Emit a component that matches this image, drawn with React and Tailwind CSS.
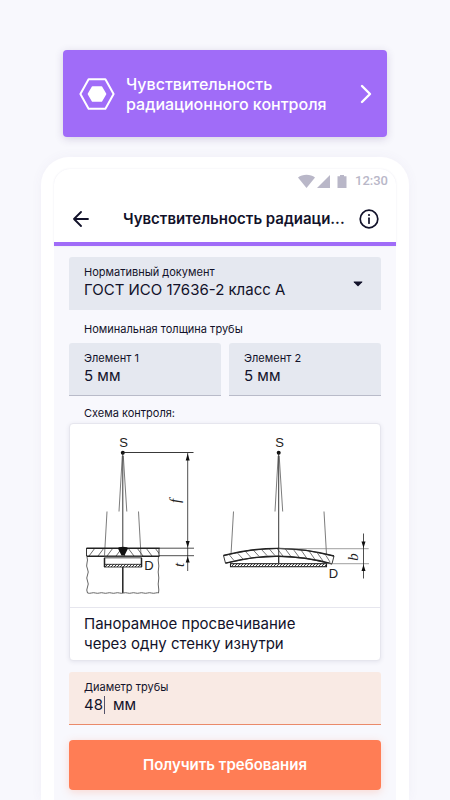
import React, { useState } from "react";

const Chevron = () => (
  <svg className="w-3 h-5 shrink-0" viewBox="0 0 12 20" fill="none" stroke="white" strokeWidth="2.4" strokeLinecap="round" strokeLinejoin="round">
    <path d="M2 2l8 8-8 8" />
  </svg>
);

const HexIcon = () => (
  <svg className="w-9 h-8 shrink-0" viewBox="0 0 36 32" fill="none">
    <path d="M9.6 1.2h16.8L34.6 16l-8.2 14.8H9.6L1.4 16z" stroke="white" strokeWidth="2" strokeLinejoin="round" />
    <path d="M13.6 9h8.8l4.1 7-4.1 7h-8.8l-4.1-7z" fill="white" stroke="white" strokeWidth="1.6" strokeLinejoin="round" />
  </svg>
);

const StatusBar = () => (
  <div className="flex h-6 items-center justify-end gap-1 pr-2 text-[#b9b7c8]">
    <svg className="h-4 w-[53px]" viewBox="0 0 53 16" fill="currentColor">
      <path d="M0 4.600C2.300 2.800 5.200 1.800 8.500 1.800s6.200 1 8.500 2.800L8.500 15z" />
      <path d="M32 2v13H19z" />
      <path d="M42 2h4v1.200h2.500V15h-9V3.200H42z" />
    </svg>
    <span className="font-[Roboto,sans-serif] text-[13px] font-medium leading-4">12:30</span>
  </div>
);

// Plain filled box with a floating label, used for every text value
const Field = ({ id, label, value, onChange }) => (
  <div className="flex-1 min-w-0 rounded-t-[3px] border-b border-[#b9bbc9] bg-[#e5e8f0] px-[15px] pt-[7px] pb-[9px]">
    <label htmlFor={id} className="block text-[11px] leading-4">
      {label}
    </label>
    <input
      id={id}
      type="text"
      value={value}
      onChange={(e) => onChange(e.target.value)}
      className="block w-full bg-transparent text-[15px] leading-5 outline-none"
    />
  </div>
);

const Scheme = () => (
  <svg className="block w-full" viewBox="70 424 310 183" fill="none" stroke="#222" strokeWidth="0.9" fontFamily="Liberation Sans, Arial, sans-serif">
    <defs>
      <pattern id="hatch" x="127" y="548" width="9" height="8" patternUnits="userSpaceOnUse">
        <path d="M1 0l6 8" stroke="#444" strokeWidth="0.8" />
      </pattern>
      <pattern id="hatchBack" x="87" y="548" width="9" height="8" patternUnits="userSpaceOnUse">
        <path d="M8 0L2 8" stroke="#444" strokeWidth="0.8" />
      </pattern>
      <pattern id="hatchFine" width="3" height="3" patternUnits="userSpaceOnUse">
        <path d="M0 3L3 0" stroke="#222" strokeWidth="0.9" />
      </pattern>
    </defs>

    {/* Left view: source, rays and flat wall */}
    <circle cx="122.800" cy="452.700" r="2" fill="#111" stroke="none" />
    <path d="M123 452.500h70.500M122.800 453v96" />
    <path d="M122.300 456L119 511.500M123.300 456l3.500 55.500M107 511.500l-2.500 44M138.500 511.500l2.500 44" strokeWidth="0.7" stroke="#444" />
    <rect x="86.500" y="548" width="36" height="8" fill="url(#hatchBack)" stroke="none" />
    <rect x="123" y="548" width="36" height="8" fill="url(#hatch)" stroke="none" />
    <path d="M86.500 548v8M159 548v8" />
    <path d="M86.500 548.200h73M86.500 556.300h73" strokeWidth="1.400" />
    <path d="M159 548.200h35M159 555.700h35" strokeWidth="0.8" />
    <path d="M118 548.500q0-1.800 5-1.800t5 1.800l-3.500 7h-3z" fill="#111" stroke="none" />
    <path d="M104 557.700h38" stroke="#888" strokeWidth="1.800" />
    <path d="M104.500 558v9M141.500 558v9" strokeWidth="1.500" />
    <rect x="104.500" y="564.300" width="37" height="2.700" fill="url(#hatchFine)" />
    <path d="M122.800 567v26" strokeWidth="1.500" />
    <path
      d="M87 557q1 3 0 6t0.500 6t0 6t0 6t0 6t0 6q2 0.600 4 0t4 0t4 0t4 0t4 0t4 0t4 0t4 0t4 0t4 0t4 0t4 0t4 0t4 0t4 0t4 0t4 0t3 0q0.600-3 0-6t0-6t0-6t0-6t0-6t0-6"
      stroke="#555"
      strokeWidth="0.9"
    />

    {/* Dimensions f and t */}
    <path d="M187.700 453v95M187.700 548v23" strokeWidth="0.8" />
    <path d="M187.700 453.500l-2 7h4zM187.700 547.500l-2-6.500h4zM187.700 556.500l-2 6h4z" fill="#111" stroke="none" />

    {/* Right view: source, rays and curved wall */}
    <circle cx="278.700" cy="452.700" r="2" fill="#111" stroke="none" />
    <path d="M278.700 453v110" />
    <path d="M278.200 456l-3.200 55.500M279.200 456l3.500 55.500M233.500 511.500l-3 51.500M324 511.500l3 51.500" strokeWidth="0.7" stroke="#444" />
    <path d="M223.500 555.500Q278.500 541 334 556l-2 7.800Q278.500 549 225.500 563.200z" fill="white" />
    <path
      d="M229 554.500l5 6M237 552.500l6 6.500M245 551l6 6.500M253 549.800l6 6.500M261 549l6 6.500M269 548.600l6 7M277 548.500l6 7.500M285 548.600l6 8M293 549l6 8M301 550l6 8.500M309 551l6 8.500M317 552.500l6 8.500M325 554l5 8"
      stroke="#555"
      strokeWidth="0.8"
    />
    <path d="M223.500 555.500Q278.500 541 334 556M225.500 563.200Q278.500 549 332 563.800" strokeWidth="1.300" />
    <path d="M278.700 548v15" />
    <rect x="230.500" y="563.700" width="96" height="3" fill="url(#hatchFine)" strokeWidth="1.100" />

    {/* Dimension b */}
    <path d="M278.700 548.700h90M327 563.700h42" stroke="#777" strokeWidth="0.7" />
    <path d="M363.500 533.500v45" strokeWidth="0.8" />
    <path d="M363.500 548l-2-6.500h4zM363.500 564.500l-2 6.500h4z" fill="#111" stroke="none" />

    <g fill="#222" stroke="none" textAnchor="middle" fontSize="13">
      <text x="123.500" y="446.500">S</text>
      <text x="279.500" y="446.500">S</text>
      <text x="149" y="570">D</text>
      <text x="333.500" y="577.500">D</text>
      <g fontFamily="Liberation Serif, Times New Roman, serif" fontStyle="italic" fontSize="15">
        <text transform="translate(180 501) rotate(-90)">f</text>
        <text transform="translate(184 565) rotate(-90)">t</text>
        <text transform="translate(358 557) rotate(-90)">b</text>
      </g>
    </g>
  </svg>
);

const App = () => {
  const [standard, setStandard] = useState("iso-a");
  const [first, setFirst] = useState("5 мм");
  const [second, setSecond] = useState("5 мм");
  const [diameter, setDiameter] = useState("48");

  return (
    <div className="flex min-h-screen flex-col bg-[#f8f8fd] px-[41px] pt-[50px] font-[Inter,sans-serif] text-[#12122a]">
      {/* Section link */}
      <a
        href="#sensitivity"
        className="mx-[22px] flex h-[87px] items-center rounded bg-[#a06cf8] pl-4 pr-[15px] text-white shadow-[0_2px_8px_rgba(60,40,110,0.18)]"
      >
        <HexIcon />
        <span className="ml-[11px] flex-1 text-base font-medium leading-5">
          Чувствительность
          <br />
          радиационного контроля
        </span>
        <Chevron />
      </a>

      {/* Phone */}
      <div className="mt-5 flex flex-1 flex-col rounded-t-[28px] bg-white px-[13px] pt-3 shadow-[0_0_12px_rgba(90,80,140,0.05)]">
        <div className="flex flex-1 flex-col rounded-t-2xl bg-[#f8f8fd]">
          <header className="rounded-t-2xl border-b-4 border-[#a06cf8] bg-white shadow-[0_0_2px_rgba(90,80,140,0.12)]">
            <StatusBar />
            <div className="flex h-[49px] items-center pl-[19px] pr-[17px] pt-[2px]">
              <button type="button" aria-label="Назад" className="shrink-0">
                <svg className="w-4 h-4" viewBox="0 0 16 16" fill="none" stroke="currentColor" strokeWidth="1.800" strokeLinecap="round" strokeLinejoin="round">
                  <path d="M15 8H1M8 1L1 8l7 7" />
                </svg>
              </button>
              <h1 className="ml-[34px] flex-1 whitespace-nowrap text-[15px] font-semibold leading-5">
                Чувствительность радиаци...
              </h1>
              <button type="button" aria-label="Информация" className="shrink-0">
                <svg className="w-5 h-5" viewBox="0 0 20 20" fill="none" stroke="currentColor" strokeWidth="1.700" strokeLinecap="round">
                  <circle cx="10" cy="10" r="8.800" />
                  <path d="M10 9.200v5" />
                  <circle cx="10" cy="6" r="1.100" fill="currentColor" stroke="none" />
                </svg>
              </button>
            </div>
          </header>

          <main className="flex flex-col px-[15px] pt-[11px] pb-[10px]">
            <div className="relative h-[53px] rounded-t-[3px] bg-[#e5e8f0] px-[15px] pt-[7px]">
              <label htmlFor="standard" className="block text-[11px] leading-4">
                Нормативный документ
              </label>
              <select
                id="standard"
                value={standard}
                onChange={(e) => setStandard(e.target.value)}
                className="block w-full appearance-none bg-transparent text-[15px] leading-5 outline-none"
              >
                <option value="iso-a">ГОСТ ИСО 17636-2 класс А</option>
              </select>
              <svg className="pointer-events-none absolute right-[18px] top-6 w-[10px] h-[6px]" viewBox="0 0 10 6" fill="currentColor">
                <path d="M1 0.500h8q0.800 0 0.200 0.700L5.500 5q-0.500 0.500-1 0L0.800 1.200Q0.200 0.500 1 0.500z" />
              </svg>
            </div>

            <p className="px-[15px] pt-[11px] pb-[6px] text-[11px] leading-4">Номинальная толщина трубы</p>

            <div className="flex gap-2">
              <Field id="first" label="Элемент 1" value={first} onChange={setFirst} />
              <Field id="second" label="Элемент 2" value={second} onChange={setSecond} />
            </div>

            <p className="px-[15px] pt-[9px] pb-[2px] text-[11px] leading-4">Схема контроля:</p>

            <figure className="overflow-hidden rounded border border-[#e6e6ee] bg-white shadow-[0_1px_4px_rgba(60,60,110,0.10)]">
              <Scheme />
              <figcaption className="border-t border-[#e6e6ee] px-[14px] py-[6px] text-[15px] leading-5">
                Панорамное просвечивание
                <br />
                через одну стенку изнутри
              </figcaption>
            </figure>

            {/* Active field with a caret */}
            <div className="mt-[11px] rounded-t-[3px] border-b border-[#ea8a6a] bg-[#f9eae4] px-[15px] pt-[7px] pb-[9px]">
              <label htmlFor="diameter" className="block text-[11px] leading-4">
                Диаметр трубы
              </label>
              <div className="flex items-center text-[15px] leading-5">
                <input
                  id="diameter"
                  type="text"
                  value={diameter}
                  onChange={(e) => setDiameter(e.target.value)}
                  className="block w-5 bg-transparent outline-none"
                />
                <span className="h-[18px] w-px bg-[#55536a]" />
                <span className="ml-2">мм</span>
              </div>
            </div>

            <button
              type="button"
              className="mt-[15px] h-[50px] rounded bg-[#ff7d55] text-[15px] font-semibold leading-5 text-white shadow-[0_2px_8px_rgba(255,125,85,0.25)]"
            >
              Получить требования
            </button>
          </main>
        </div>
      </div>
    </div>
  );
};

export default App;
